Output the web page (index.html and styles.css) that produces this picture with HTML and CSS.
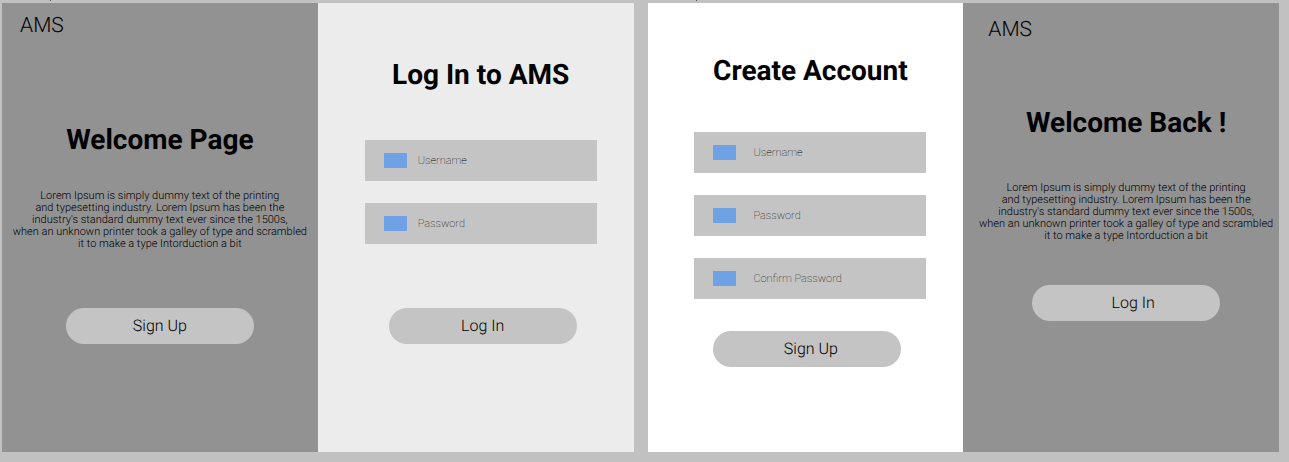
FILE: index.html
```html
<!DOCTYPE html>
<html lang="en">
<head>
<meta charset="utf-8">
<meta name="viewport" content="width=device-width, initial-scale=1">
<title>AMS</title>
<link rel="stylesheet" href="styles.css">
</head>
<body>
<main class="board">
  <section class="frame frame-login">
    <div class="panel panel-intro panel-welcome">
      <p class="brand">AMS</p>
      <h1 class="title">Welcome Page</h1>
      <p class="copy">Lorem Ipsum is simply dummy text of the printing<br>and typesetting industry. Lorem Ipsum has been the<br>industry's standard dummy text ever since the 1500s,<br>when an unknown printer took a galley of type and scrambled<br>it to make a type Intorduction a bit</p>
      <button class="pill" type="button">Sign Up</button>
    </div>
    <form class="panel panel-form panel-login">
      <h2 class="title">Log In to AMS</h2>
      <div class="fields">
        <label class="field"><span class="icon"></span><input class="input" type="text" placeholder="Username" aria-label="Username"></label>
        <label class="field"><span class="icon"></span><input class="input" type="password" placeholder="Password" aria-label="Password"></label>
        <button class="pill" type="button">Log In</button>
      </div>
    </form>
  </section>
  <section class="frame frame-register">
    <form class="panel panel-form panel-create">
      <h2 class="title">Create Account</h2>
      <div class="fields">
        <label class="field"><span class="icon"></span><input class="input" type="text" placeholder="Username" aria-label="Username"></label>
        <label class="field"><span class="icon"></span><input class="input" type="password" placeholder="Password" aria-label="Password"></label>
        <label class="field"><span class="icon"></span><input class="input" type="password" placeholder="Confirm Password" aria-label="Confirm Password"></label>
        <button class="pill" type="button">Sign Up</button>
      </div>
    </form>
    <div class="panel panel-intro panel-back">
      <p class="brand">AMS</p>
      <h2 class="title">Welcome Back !</h2>
      <p class="copy">Lorem Ipsum is simply dummy text of the printing<br>and typesetting industry. Lorem Ipsum has been the<br>industry's standard dummy text ever since the 1500s,<br>when an unknown printer took a galley of type and scrambled<br>it to make a type Intorduction a bit</p>
      <button class="pill" type="button">Log In</button>
    </div>
  </section>
</main>
</body>
</html>
```

FILE: styles.css
```css
* {
  box-sizing: border-box;
}

body {
  margin: 0;
  background: #c1c1c1;
  color: #000;
  font-family: Roboto, "Liberation Sans", sans-serif;
  text-rendering: geometricPrecision;
}

.board {
  display: flex;
  gap: 14px;
  min-height: 100vh;
  padding: 3px 10px 10px 2px;
}

.frame {
  position: relative;
  display: grid;
  grid-template-columns: 1fr 1fr;
  flex: 1;
}

/* tick above each frame */
.frame::before {
  content: "";
  position: absolute;
  top: -3px;
  left: 48px;
  width: 1px;
  height: 1px;
  background: #555;
}

.panel {
  display: flex;
  flex-direction: column;
  align-items: center;
}

.panel-intro {
  background: #929292;
}

.panel-welcome {
  padding-top: 10px;
}

.panel-back {
  padding: 14px 0 0 10px;
}

.panel-login {
  padding: 56px 0 0 10px;
  background: #ececec;
}

.panel-create {
  padding: 52px 0 0 10px;
  background: #fff;
}

.brand {
  align-self: flex-start;
  margin: 0 0 0 18px;
  font-size: 21px;
  font-weight: 300;
  line-height: 26px;
}

.panel-back .brand {
  margin-left: 15px;
}

.title {
  margin: 0;
  font-size: 28px;
  font-weight: 700;
  line-height: 32px;
  white-space: nowrap;
}

.panel-welcome .title {
  margin-top: 85px;
}

.panel-back .title {
  margin-top: 64px;
}

.copy {
  margin: 34px 0 58px;
  font-size: 11px;
  font-weight: 300;
  line-height: 12px;
  text-align: center;
  white-space: nowrap;
}

.panel-back .copy {
  margin: 43px 0 43px;
}

.pill {
  width: 188px;
  height: 36px;
  padding: 0;
  border: 0;
  border-radius: 18px;
  background: #c4c4c4;
  color: #000;
  font-family: inherit;
  font-size: 16px;
  font-weight: 300;
  line-height: 20px;
  text-rendering: inherit;
}

.panel-back .pill {
  padding-left: 14px;
}

.fields {
  display: flex;
  flex-direction: column;
  gap: 22px;
  width: 232px;
  margin-top: 49px;
}

.panel-create .fields {
  margin-top: 45px;
}

.field {
  display: flex;
  align-items: center;
  gap: 11px;
  height: 41px;
  padding: 0 19px;
  background: #c4c4c4;
}

.panel-create .field {
  gap: 17px;
}

.icon {
  flex: none;
  width: 23px;
  height: 15px;
  background: #6ea2e4;
}

.input {
  flex: 1;
  min-width: 0;
  padding: 0;
  border: 0;
  outline: 0;
  background: transparent;
  color: #000;
  font-family: inherit;
  font-size: 11px;
  font-weight: 100;
  line-height: 16px;
  text-rendering: inherit;
}

.input::placeholder {
  color: #000;
  opacity: 1;
}

.panel-login .pill {
  margin: 42px 0 0 24px;
}

.panel-create .pill {
  margin: 10px 0 0 19px;
  padding-left: 7px;
}
```
